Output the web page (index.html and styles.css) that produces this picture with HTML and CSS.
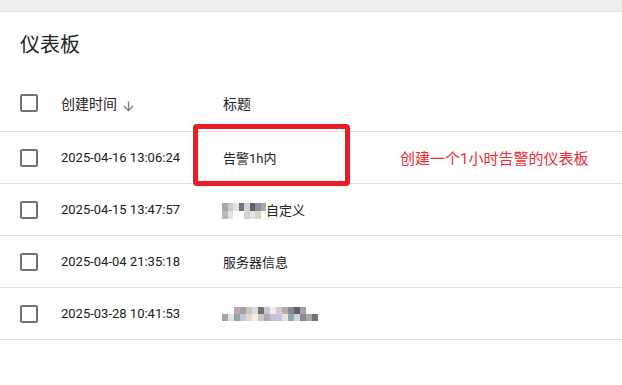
FILE: index.html
```html
<!DOCTYPE html>
<html lang="zh-CN">
<head>
<meta charset="utf-8">
<title>仪表板</title>
<link rel="stylesheet" href="styles.css">
</head>
<body>
<div class="topbar"></div>
<h1 class="title">仪表板</h1>
<div class="table">
  <div class="row head">
    <div class="cell-check"><span class="checkbox"></span></div>
    <div class="cell-date">创建时间
      <svg class="sort" viewBox="0 0 24 24" width="15" height="15"><path d="M20 12l-1.41-1.41L13 16.17V4h-2v12.17l-5.58-5.59L4 12l8 8 8-8z"/></svg>
    </div>
    <div class="cell-title">标题</div>
  </div>
  <div class="row">
    <div class="cell-check"><span class="checkbox"></span></div>
    <div class="cell-date">2025-04-16 13:06:24</div>
    <div class="cell-title">告警1h内</div>
    <div class="note">创建一个1小时告警的仪表板</div>
  </div>
  <div class="row">
    <div class="cell-check"><span class="checkbox"></span></div>
    <div class="cell-date">2025-04-15 13:47:57</div>
    <div class="cell-title"><span class="blur b2">
      <i class="k1"></i><i class="k2"></i><i class="k3"></i><i class="k4"></i><i class="k5"></i><i class="k6"></i><i class="k7"></i><i class="k8"></i>
      <i class="k9"></i><i class="k3"></i><i class="k0"></i><i class="k0"></i><i class="k5"></i><i class="k3"></i><i class="k10"></i><i class="k0"></i>
    </span>自定义</div>
  </div>
  <div class="row">
    <div class="cell-check"><span class="checkbox"></span></div>
    <div class="cell-date">2025-04-04 21:35:18</div>
    <div class="cell-title">服务器信息</div>
  </div>
  <div class="row last">
    <div class="cell-check"><span class="checkbox"></span></div>
    <div class="cell-date">2025-03-28 10:41:53</div>
    <div class="cell-title"><span class="blur b4">
      <i class="k0"></i><i class="k0"></i><i class="k11"></i><i class="k12"></i><i class="k13"></i><i class="k14"></i><i class="k4"></i><i class="k15"></i><i class="k16"></i><i class="k17"></i><i class="k11"></i><i class="k18"></i><i class="k6"></i><i class="k12"></i><i class="k0"></i><i class="k0"></i>
      <i class="k12"></i><i class="k3"></i><i class="k19"></i><i class="k15"></i><i class="k20"></i><i class="k16"></i><i class="k2"></i><i class="k11"></i><i class="k21"></i><i class="k15"></i><i class="k3"></i><i class="k19"></i><i class="k5"></i><i class="k18"></i><i class="k1"></i><i class="k4"></i>
    </span></div>
  </div>
</div>
<div class="callout"></div>
</body>
</html>
```

FILE: styles.css
```css
html, body {
  margin: 0;
  padding: 0;
  background: #ffffff;
}
body {
  position: relative;
  width: 622px;
  height: 385px;
  overflow: hidden;
  font-family: Roboto, "Noto Sans CJK SC", sans-serif;
  color: #212121;
}
.topbar {
  height: 11px;
  background: #eeeeee;
  border-bottom: 1px solid #dcdcdc;
}
.title {
  margin: 0;
  padding: 19px 0 18px 20px;
  font-size: 20px;
  line-height: 28px;
  font-weight: 400;
  color: #212121;
}
.row {
  display: flex;
  align-items: center;
  height: 51px;
  border-top: 1px solid #e0e0e0;
  font-size: 13px;
}
.row.last {
  border-bottom: 1px solid #e0e0e0;
}
.row.head {
  height: 51px;
  padding-bottom: 3px;
  border-top: none;
  font-size: 14px;
}
.cell-check {
  width: 41px;
  padding-left: 20px;
  display: flex;
  align-items: center;
}
.checkbox {
  display: block;
  width: 18px;
  height: 18px;
  box-sizing: border-box;
  border: 2px solid #727272;
  border-radius: 2px;
}
.cell-date {
  width: 162px;
  display: flex;
  align-items: center;
}
.sort {
  fill: #7a7a7a;
  margin-left: 4px;
  margin-top: 7px;
}
.cell-title {
  width: 177px;
  display: flex;
  align-items: center;
}
.note {
  font-size: 15px;
  color: #ee2a34;
}
.blur {
  display: inline-grid;
  grid-auto-flow: row;
  margin-left: -1px;
}
.blur.b2 {
  grid-template-columns: repeat(8, 5.5px);
  grid-auto-rows: 8px;
  margin-top: 2px;
}
.blur.b4 {
  grid-template-columns: repeat(16, 6px);
  grid-auto-rows: 7px;
  margin-top: 1px;
}
.blur i { display: block; }
.k0 { background: #ffffff; }
.k1 { background: #a3aaa4; }
.k2 { background: #c6cac2; }
.k3 { background: #e6e2dc; }
.k4 { background: #727276; }
.k5 { background: #cfd4dc; }
.k6 { background: #5f5f68; }
.k7 { background: #8a90a0; }
.k8 { background: #a8a8aa; }
.k9 { background: #b6bcb4; }
.k10 { background: #d8d2c4; }
.k11 { background: #b8a8b0; }
.k12 { background: #a8a0a8; }
.k13 { background: #c8c8c0; }
.k14 { background: #d8dce0; }
.k15 { background: #c0c8d8; }
.k16 { background: #f0ece8; }
.k17 { background: #d8c8d8; }
.k18 { background: #8c8890; }
.k19 { background: #90a4b0; }
.k20 { background: #e8d8c8; }
.k21 { background: #c8c0d0; }
.callout {
  position: absolute;
  left: 193px;
  top: 124px;
  width: 157px;
  height: 62px;
  box-sizing: border-box;
  border: 5px solid #ed1c24;
  border-radius: 4px;
}
```
